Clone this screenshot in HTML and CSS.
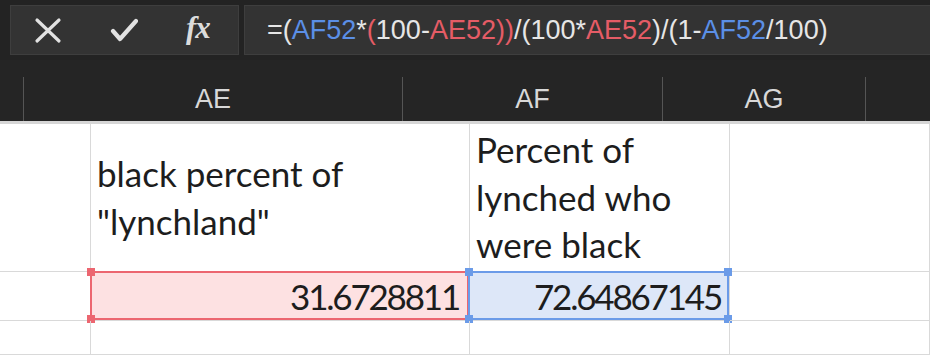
FILE: index.html
```html
<!DOCTYPE html>
<html lang="en">
<head>
    <meta charset="UTF-8">
    <meta name="viewport" content="width=device-width, initial-scale=1.0">
    <title>Sheet</title>
    <link rel="stylesheet" href="styles.css">
</head>
<body>
    <div class="formula-bar">
        <div class="fx-buttons">
            <svg class="icon" width="28" height="28" viewBox="0 0 28 28">
                <path d="M3 4 L25 25 M25 4 L3 25" stroke="#e2e2e2" stroke-width="3.2" stroke-linecap="round" fill="none"/>
            </svg>
            <svg class="icon" width="28" height="28" viewBox="0 0 28 28">
                <path d="M3 15 L10 23 L26 5" stroke="#e2e2e2" stroke-width="4.2" stroke-linecap="round" stroke-linejoin="round" fill="none"/>
            </svg>
            <span class="fx">fx</span>
        </div>
        <div class="formula-input">
            <span class="tok-w">=(</span><span class="tok-b">AF52</span><span class="tok-w">*</span><span class="tok-r">(</span><span class="tok-w">100-</span><span class="tok-r">AE52))</span><span class="tok-w">/(100*</span><span class="tok-r">AE52</span><span class="tok-w">)/(1-</span><span class="tok-b">AF52</span><span class="tok-w">/100)</span>
        </div>
    </div>

    <div class="col-head">
        <div class="head-cell first"></div>
        <div class="head-cell ae">AE</div>
        <div class="head-cell af">AF</div>
        <div class="head-cell ag">AG</div>
        <div class="head-cell rest"></div>
    </div>

    <div class="grid">
        <div class="cell"></div>
        <div class="cell text">black percent of<br>"lynchland"</div>
        <div class="cell text">Percent of<br>lynched who<br>were black</div>
        <div class="cell"></div>

        <div class="cell"></div>
        <div class="cell num ref-red">
            <div class="sel red">
                <span class="handle tl"></span>
                <span class="handle bl"></span>
            </div>
            <span class="val">31.6728811</span>
        </div>
        <div class="cell num ref-blue">
            <div class="sel blue">
                <span class="handle tl"></span>
                <span class="handle tr"></span>
                <span class="handle bl"></span>
                <span class="handle br"></span>
            </div>
            <span class="val">72.64867145</span>
        </div>
        <div class="cell"></div>

        <div class="cell"></div>
        <div class="cell"></div>
        <div class="cell"></div>
        <div class="cell"></div>
    </div>
</body>
</html>
```

FILE: styles.css
```css
body {
    margin: 0;
    padding: 0;
    width: 930px;
    height: 355px;
    overflow: hidden;
    background: #ffffff;
    font-family: "Liberation Sans", Arial, sans-serif;
}

.formula-bar {
    height: 60px;
    box-sizing: border-box;
    padding: 5px 0 5px 10px;
    display: flex;
    gap: 5px;
    background: #232323;
}

.fx-buttons {
    width: 229px;
    box-sizing: border-box;
    background: #333333;
    border: 1px solid #3e3e3e;
    display: flex;
    align-items: center;
    padding-left: 23px;
    gap: 48px;
}

.icon {
    display: block;
}

.fx {
    font-family: "Liberation Serif", "Times New Roman", serif;
    font-style: italic;
    font-weight: bold;
    font-size: 31px;
    color: #dcdcdc;
    letter-spacing: -1px;
    margin-top: -4px;
}

.formula-input {
    flex: 1;
    background: #333333;
    border: 1px solid #3e3e3e;
    border-right: none;
    display: flex;
    align-items: center;
    padding-left: 22px;
    font-size: 27px;
    white-space: nowrap;
}

.tok-w { color: #e6e6e6; }
.tok-b { color: #5b8fe6; }
.tok-r { color: #e55c66; }

.col-head {
    height: 61px;
    box-sizing: border-box;
    padding-top: 17px;
    background: #252525;
    display: flex;
}

.head-cell {
    height: 44px;
    display: flex;
    align-items: center;
    justify-content: center;
    color: #d8d8d8;
    font-size: 27px;
    border-left: 1px solid #555555;
    box-sizing: border-box;
}

.head-cell.first { width: 23px; border-left: none; }
.head-cell.ae { width: 379px; }
.head-cell.af { width: 260px; }
.head-cell.ag { width: 203px; }
.head-cell.rest { flex: 1; }

.grid {
    border-top: 3px solid #d6d6d6;
    display: grid;
    grid-template-columns: 91px 379px 260px 1fr;
    grid-template-rows: 148px 49px 34px;
}

.cell {
    box-sizing: border-box;
    border-right: 1px solid #d9d9d9;
    border-bottom: 1px solid #d9d9d9;
    position: relative;
}

.cell.text {
    display: flex;
    align-items: center;
    padding-left: 6px;
    font-family: Lato, "Liberation Sans", sans-serif;
    font-size: 35px;
    line-height: 47.5px;
    color: #1d1d1d;
}

.cell.num {
    display: flex;
    align-items: center;
    justify-content: flex-end;
    font-family: Lato, "Liberation Sans", sans-serif;
    font-size: 35px;
    color: #1d1d1d;
}

.cell.num .val {
    position: relative;
    letter-spacing: -2.2px;
}

.ref-red {
    background: #fde1e2;
    padding-right: 10px;
}

.ref-blue {
    background: #dde7f8;
    padding-right: 8px;
}

.sel {
    position: absolute;
    top: -1px;
    bottom: 0;
    right: 0;
    border: 2px solid;
}

.sel.red {
    left: -1px;
    border-color: #ec6670;
}

.sel.blue {
    left: -2px;
    border-color: #6b9be8;
}

.handle {
    position: absolute;
    width: 8px;
    height: 8px;
}

.red .handle { background: #ec6670; }
.blue .handle { background: #6b9be8; }

.handle.tl { left: -5px; top: -5px; }
.handle.tr { right: -5px; top: -5px; }
.handle.bl { left: -5px; bottom: -5px; }
.handle.br { right: -5px; bottom: -5px; }
```
